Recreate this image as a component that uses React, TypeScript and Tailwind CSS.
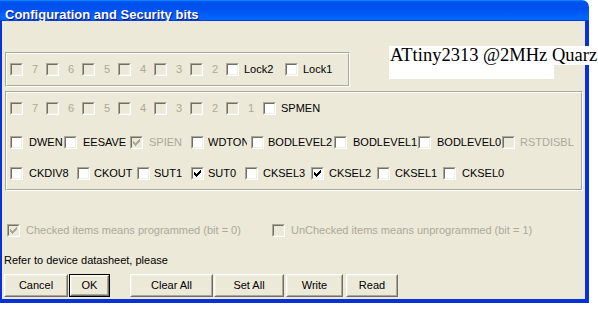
import React from "react";

type Item = {
  label: string;
  w: string;
  gap: string;
  checked?: boolean;
  disabled?: boolean;
  clip?: string;
};

function Box({ checked, disabled }: { checked?: boolean; disabled?: boolean }) {
  return (
    <div className="relative w-[13px] h-[13px] shrink-0 border border-t-[#aca899] border-l-[#aca899] border-r-white border-b-white">
      <div
        className={`w-full h-full border border-t-[#716f64] border-l-[#716f64] border-r-[#f1efe2] border-b-[#f1efe2] ${
          disabled ? "bg-[#ece9d8]" : "bg-white"
        }`}
      />
      {checked && (
        <svg
          className="absolute left-[-1px] top-[-1px]"
          width="13"
          height="13"
          viewBox="0 0 13 13"
          shapeRendering="crispEdges"
        >
          <g fill={disabled ? "#aca899" : "#000"}>
            <rect x="3" y="5" width="1" height="3" />
            <rect x="4" y="6" width="1" height="3" />
            <rect x="5" y="7" width="1" height="3" />
            <rect x="6" y="6" width="1" height="3" />
            <rect x="7" y="5" width="1" height="3" />
            <rect x="8" y="4" width="1" height="3" />
            <rect x="9" y="3" width="1" height="3" />
          </g>
        </svg>
      )}
    </div>
  );
}

function Check({ item }: { item: Item }) {
  return (
    <div className={`flex items-center h-[13px] shrink-0 ${item.w}`}>
      <Box checked={item.checked} disabled={item.disabled} />
      <span
        className={`${item.gap} text-[11px] leading-[13px] whitespace-nowrap ${
          item.clip ? `overflow-hidden ${item.clip}` : ""
        } ${item.disabled ? "text-[#aca899]" : "text-black"}`}
      >
        {item.label}
      </span>
    </div>
  );
}

function Row({ items, className }: { items: Item[]; className?: string }) {
  return (
    <div className={`flex items-center h-[13px] ${className ?? ""}`}>
      {items.map((it, i) => (
        <Check key={i} item={it} />
      ))}
    </div>
  );
}

const d = (label: string, w = "w-[36px]"): Item => ({ label, w, gap: "ml-[9px]", disabled: true });

const row1: Item[] = [
  d("7"),
  d("6"),
  d("5"),
  d("4"),
  d("3"),
  d("2"),
  { label: "Lock2", w: "w-[59px]", gap: "ml-[5px]" },
  { label: "Lock1", w: "w-auto", gap: "ml-[5px]" },
];

const row2: Item[] = [
  d("7"),
  d("6"),
  d("5"),
  d("4"),
  d("3"),
  d("2"),
  d("1", "w-[37px]"),
  { label: "SPMEN", w: "w-auto", gap: "ml-[5px]" },
];

const row3: Item[] = [
  { label: "DWEN", w: "w-[54px]", gap: "ml-[6px]" },
  { label: "EESAVE", w: "w-[66px]", gap: "ml-[6px]" },
  { label: "SPIEN", w: "w-[61px]", gap: "ml-[6px]", checked: true, disabled: true },
  { label: "WDTON", w: "w-[60px]", gap: "ml-[4px]", clip: "w-[39px]" },
  { label: "BODLEVEL2", w: "w-[83px]", gap: "ml-[4px]" },
  { label: "BODLEVEL1", w: "w-[84px]", gap: "ml-[6px]" },
  { label: "BODLEVEL0", w: "w-[84px]", gap: "ml-[6px]" },
  { label: "RSTDISBL", w: "w-auto", gap: "ml-[5px]", disabled: true },
];

const row4: Item[] = [
  { label: "CKDIV8", w: "w-[67px]", gap: "ml-[6px]" },
  { label: "CKOUT", w: "w-[60px]", gap: "ml-[4px]" },
  { label: "SUT1", w: "w-[54px]", gap: "ml-[4px]" },
  { label: "SUT0", w: "w-[54px]", gap: "ml-[4px]", checked: true },
  { label: "CKSEL3", w: "w-[66px]", gap: "ml-[5px]" },
  { label: "CKSEL2", w: "w-[66px]", gap: "ml-[5px]", checked: true },
  { label: "CKSEL1", w: "w-[66px]", gap: "ml-[5px]" },
  { label: "CKSEL0", w: "w-auto", gap: "ml-[6px]" },
];

function Group({ className, children }: { className: string; children: React.ReactNode }) {
  return (
    <div
      className={`${className} shrink-0 border border-t-[#aca899] border-l-[#aca899] border-r-white border-b-white`}
    >
      <div className="w-full h-full border border-t-white border-l-white border-r-[#aca899] border-b-[#aca899]">
        {children}
      </div>
    </div>
  );
}

function Btn({ label, className, def }: { label: string; className: string; def?: boolean }) {
  const face = (
    <div className="h-full w-full border border-t-white border-l-white border-r-[#716f64] border-b-[#716f64]">
      <div className="h-full w-full border border-t-[#f1efe2] border-l-[#f1efe2] border-r-[#aca899] border-b-[#aca899] flex items-center justify-center text-[11px] leading-[13px] text-black">
        {label}
      </div>
    </div>
  );
  return (
    <div className={`${className} h-[23px] shrink-0 ${def ? "border border-black" : ""}`}>{face}</div>
  );
}

export default function App() {
  return (
    <div className="relative w-[598px] h-[309px] bg-white overflow-hidden font-['Liberation_Sans',Arial,sans-serif]">
      <div className="w-[589px] h-[303px] flex flex-col rounded-tr-[7px] overflow-hidden">
        <div className="h-[21px] shrink-0 bg-[linear-gradient(180deg,#0997ff,#0053ee_8%,#0050ee_40%,#06f_88%,#06f_93%,#005bff_95%,#003dd7_96%,#003dd7)] pl-[5px] pt-[2px]">
          <span className="text-white font-bold text-[13px] leading-[19px] [text-shadow:1px_1px_#0f1089] whitespace-nowrap">
            Configuration and Security bits
          </span>
        </div>
        <div className="flex-1 bg-[#0831d9] pl-[2px] pr-[4px] pb-[4px] flex">
          <div className="flex-1 bg-[#ece9d8] flex flex-col">
            <Group className="ml-[3px] mt-[31px] w-[345px] h-[35px]">
              <Row items={row1} className="ml-[3px] mt-[9px]" />
            </Group>
            <Group className="ml-[3px] mt-[4px] w-[578px] h-[100px]">
              <Row items={row2} className="ml-[3px] mt-[9px]" />
              <Row items={row3} className="ml-[3px] mt-[21px]" />
              <Row items={row4} className="ml-[3px] mt-[18px]" />
            </Group>
            <div className="flex items-center h-[13px] mt-[33px] ml-[5px]">
              <div className="w-[265px] flex items-center">
                <Check
                  item={{
                    label: "Checked items means programmed (bit = 0)",
                    w: "w-auto",
                    gap: "ml-[6px]",
                    checked: true,
                    disabled: true,
                  }}
                />
              </div>
              <Check
                item={{
                  label: "UnChecked items means unprogrammed (bit = 1)",
                  w: "w-auto",
                  gap: "ml-[6px]",
                  disabled: true,
                }}
              />
            </div>
            <div className="mt-[17px] ml-[2px] text-[11px] leading-[13px] text-black">
              Refer to device datasheet, please
            </div>
            <div className="flex mt-[7px] ml-[2px]">
              <Btn label="Cancel" className="w-[64px]" />
              <Btn label="OK" className="w-[41px] ml-[1px]" def />
              <Btn label="Clear All" className="w-[83px] ml-[20px]" />
              <Btn label="Set All" className="w-[70px] ml-[1px]" />
              <Btn label="Write" className="w-[57px] ml-[2px]" />
              <Btn label="Read" className="w-[52px] ml-[3px]" />
            </div>
          </div>
        </div>
      </div>
      <div className="absolute left-[389px] top-[46px] w-[209px] h-[19px] bg-white" />
      <div className="absolute left-[389px] top-[65px] w-[165px] h-[14px] bg-white" />
      <div className="absolute left-[390px] top-[46px] text-[18.5px] leading-[18px] text-black whitespace-nowrap font-['Liberation_Serif','Times_New_Roman',serif]">
        ATtiny2313 @2MHz Quarz
      </div>
    </div>
  );
}
